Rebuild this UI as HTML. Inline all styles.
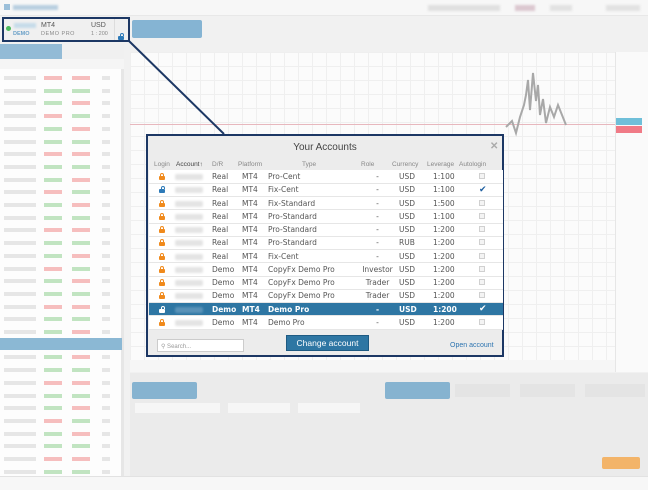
<!DOCTYPE html>
<html><head><meta charset="utf-8"><style>
*{margin:0;padding:0;box-sizing:border-box}
body{width:648px;height:490px;overflow:hidden;background:#f1f1f1;font-family:"Liberation Sans",sans-serif;position:relative}
.a{position:absolute}
.lr{position:absolute;left:0;width:122px;height:12.7px;font-size:6px;color:#c8c8c8}
.lr span{position:absolute;top:3px}
#modal{position:absolute;left:146px;top:134px;width:358px;height:223px;border:2px solid #1c3764;background:#ececec}
table{border-collapse:collapse;position:absolute;left:1px;top:34px;width:354px;font-size:7.5px;color:#555;font-family:"DejaVu Sans","Liberation Sans",sans-serif}
td{height:13.25px;border-bottom:1px solid #e6e6e6;background:#fff;white-space:nowrap;padding:0}
tr.sel td{background:#2e76a3;color:#fff;font-weight:bold}
.blur{display:inline-block;width:28px;height:6px;background:#e4e4e4;border-radius:2px;vertical-align:middle;filter:blur(1px)}
tr.sel .blur{background:#5a93b8}
.lock{display:inline-block;width:6px;height:4px;background:#f08a1c;border-radius:1px;position:relative;vertical-align:middle;margin-top:2px}
.lock:before{content:"";position:absolute;left:1px;top:-3px;width:2px;height:2px;border:1px solid #f08a1c;border-bottom:none;border-radius:2px 2px 0 0}
.lock.b{background:#2d7ab8}.lock.b:before{border-color:#2d7ab8;left:2px}
.lock.w{background:#fff}.lock.w:before{border-color:#fff;left:2px}
.cb{display:inline-block;width:6px;height:6px;border:1px solid #d0d0d0;background:#f4f4f4}
.hd{position:absolute;top:25px;font-size:6.5px;color:#888}
</style></head><body>
<div class="a" style="left:0;top:0;width:648px;height:16px;background:#f7f7f7;border-bottom:1px solid #e8e8e8"></div>
<div class="a" style="left:4px;top:4px;width:6px;height:6px;background:#9cc0da"></div>
<div class="a" style="left:13px;top:5px;width:45px;height:5px;background:#b8cfe0;filter:blur(1px)"></div>
<div class="a" style="left:428px;top:5px;width:72px;height:6px;background:#e0e0e0;filter:blur(1px)"></div>
<div class="a" style="left:515px;top:5px;width:20px;height:6px;background:#dcc8d0;filter:blur(1px)"></div>
<div class="a" style="left:550px;top:5px;width:22px;height:6px;background:#e2e2e2;filter:blur(1px)"></div>
<div class="a" style="left:606px;top:5px;width:34px;height:6px;background:#e2e2e2;filter:blur(1px)"></div>
<div class="a" style="left:2px;top:17px;width:128px;height:25px;background:#f0f0f0;border:2px solid #1c3764"></div>
<div class="a" style="left:6px;top:26px;width:5px;height:5px;border-radius:50%;background:#4cba5c"></div>
<div class="a" style="left:14px;top:23px;width:22px;height:5px;background:#c6dbe9;filter:blur(1px)"></div>
<div class="a" style="left:13px;top:31px;font-size:5.5px;color:#6aa0c8;font-weight:bold">DEMO</div>
<div class="a" style="left:41px;top:22px;font-size:7px;color:#555">MT4</div>
<div class="a" style="left:41px;top:31px;font-size:5.5px;color:#888;letter-spacing:.5px">DEMO PRO</div>
<div class="a" style="left:91px;top:22px;font-size:7px;color:#555">USD</div>
<div class="a" style="left:91px;top:31px;font-size:5.5px;color:#888">1 : 200</div>
<div class="a" style="left:114px;top:19px;width:1px;height:21px;background:#ddd"></div>
<div class="a" style="left:118px;top:28px"><span class="lock b"></span></div>
<div class="a" style="left:132px;top:20px;width:70px;height:18px;background:#85b4d3;border-radius:2px"></div>
<div class="a" style="left:0;top:44px;width:62px;height:15px;background:#93bbd6"></div>
<div class="a" style="left:62px;top:44px;width:62px;height:15px;background:#f0f0f0"></div>
<div class="a" style="left:0;top:59px;width:124px;height:10px;background:#f5f5f5"></div>
<div class="a" style="left:0;top:69px;width:124px;height:408px;background:#fdfdfd;border-right:3px solid #e6e6e6"></div>
<div id="left"></div>
<div class="a" style="left:0;top:338px;width:122px;height:12px;background:#8bb8d4"></div>
<div class="a" style="left:130px;top:38px;width:518px;height:14px;background:#f1f1f1"></div>
<div class="a" style="left:130px;top:52px;width:485px;height:308px;background:#fbfbfb;background-image:linear-gradient(#efefef 1px,transparent 1px),linear-gradient(90deg,#efefef 1px,transparent 1px);background-size:14px 14px"></div>
<div class="a" style="left:615px;top:52px;width:33px;height:320px;background:#fafafa;border-left:1px solid #e6e6e6"></div>
<div class="a" style="left:130px;top:124px;width:485px;height:1px;background:#e7b7bd"></div>
<div class="a" style="left:616px;top:118px;width:26px;height:7px;background:#6fbfd9"></div>
<div class="a" style="left:616px;top:126px;width:26px;height:7px;background:#f07a86"></div>
<svg class="a" style="left:500px;top:55px" width="80" height="100"><path d="M6 72 L12 66 L16 78 L20 62 L24 50 L26 40 L28 25 L30 55 L33 18 L36 46 L38 30 L40 60 L43 44 L46 68 L50 52 L54 62 L58 50 L62 60 L66 70" stroke="#a8a8a8" stroke-width="2" fill="none" filter="blur(0.6)"/></svg>
<div class="a" style="left:130px;top:360px;width:485px;height:12px;background:#f6f6f6"></div>
<div class="a" style="left:130px;top:373px;width:518px;height:103px;background:#ebebeb"></div>
<div class="a" style="left:132px;top:382px;width:65px;height:17px;background:#86b3d0;border-radius:2px"></div>
<div class="a" style="left:385px;top:382px;width:65px;height:17px;background:#86b3d0;border-radius:2px"></div>
<div class="a" style="left:455px;top:384px;width:55px;height:13px;background:#e4e4e4"></div>
<div class="a" style="left:520px;top:384px;width:55px;height:13px;background:#e4e4e4"></div>
<div class="a" style="left:585px;top:384px;width:60px;height:13px;background:#e4e4e4"></div>
<div class="a" style="left:135px;top:403px;width:85px;height:10px;background:#f6f6f6"></div>
<div class="a" style="left:228px;top:403px;width:62px;height:10px;background:#f6f6f6"></div>
<div class="a" style="left:298px;top:403px;width:62px;height:10px;background:#f6f6f6"></div>
<div class="a" style="left:602px;top:457px;width:38px;height:12px;background:#f3b469;border-radius:2px"></div>
<div class="a" style="left:0;top:476px;width:648px;height:14px;background:#f7f7f7;border-top:1px solid #e2e2e2"></div>
<svg class="a" style="left:0;top:0" width="648" height="490"><line x1="129" y1="41" x2="224" y2="134" stroke="#1c3764" stroke-width="2"/></svg>
<div id="modal">
<div class="a" style="left:0;top:6px;width:354px;text-align:center;font-size:10px;color:#444">Your Accounts</div>
<div class="a" style="left:342px;top:5px;font-size:10px;color:#aaa;font-weight:bold">✕</div>
<div class="hd" style="left:6px">Login</div>
<div class="hd" style="left:28px;color:#444">Account↑</div>
<div class="hd" style="left:64px">D/R</div>
<div class="hd" style="left:90px">Platform</div>
<div class="hd" style="left:154px">Type</div>
<div class="hd" style="left:213px">Role</div>
<div class="hd" style="left:244px">Currency</div>
<div class="hd" style="left:279px">Leverage</div>
<div class="hd" style="left:311px">Autologin</div>
<table>
<colgroup><col style="width:26px"><col style="width:37px"><col style="width:30px"><col style="width:26px"><col style="width:88px"><col style="width:43px"><col style="width:34px"><col style="width:37px"><col style="width:33px"></colgroup>
<tr><td style="padding-left:10px"><span class="lock"></span></td><td><span class="blur"></span></td><td>Real</td><td>MT4</td><td>Pro-Cent</td><td style="text-align:center">-</td><td>USD</td><td>1:100</td><td style="padding-left:9px"><span class="cb"></span></td></tr>
<tr><td style="padding-left:10px"><span class="lock b"></span></td><td><span class="blur"></span></td><td>Real</td><td>MT4</td><td>Fix-Cent</td><td style="text-align:center">-</td><td>USD</td><td>1:100</td><td style="padding-left:9px;color:#1e5fa0;font-size:9px;font-weight:bold">✔</td></tr>
<tr><td style="padding-left:10px"><span class="lock"></span></td><td><span class="blur"></span></td><td>Real</td><td>MT4</td><td>Fix-Standard</td><td style="text-align:center">-</td><td>USD</td><td>1:500</td><td style="padding-left:9px"><span class="cb"></span></td></tr>
<tr><td style="padding-left:10px"><span class="lock"></span></td><td><span class="blur"></span></td><td>Real</td><td>MT4</td><td>Pro-Standard</td><td style="text-align:center">-</td><td>USD</td><td>1:100</td><td style="padding-left:9px"><span class="cb"></span></td></tr>
<tr><td style="padding-left:10px"><span class="lock"></span></td><td><span class="blur"></span></td><td>Real</td><td>MT4</td><td>Pro-Standard</td><td style="text-align:center">-</td><td>USD</td><td>1:200</td><td style="padding-left:9px"><span class="cb"></span></td></tr>
<tr><td style="padding-left:10px"><span class="lock"></span></td><td><span class="blur"></span></td><td>Real</td><td>MT4</td><td>Pro-Standard</td><td style="text-align:center">-</td><td>RUB</td><td>1:200</td><td style="padding-left:9px"><span class="cb"></span></td></tr>
<tr><td style="padding-left:10px"><span class="lock"></span></td><td><span class="blur"></span></td><td>Real</td><td>MT4</td><td>Fix-Cent</td><td style="text-align:center">-</td><td>USD</td><td>1:200</td><td style="padding-left:9px"><span class="cb"></span></td></tr>
<tr><td style="padding-left:10px"><span class="lock"></span></td><td><span class="blur"></span></td><td>Demo</td><td>MT4</td><td>CopyFx Demo Pro</td><td style="text-align:center">Investor</td><td>USD</td><td>1:200</td><td style="padding-left:9px"><span class="cb"></span></td></tr>
<tr><td style="padding-left:10px"><span class="lock"></span></td><td><span class="blur"></span></td><td>Demo</td><td>MT4</td><td>CopyFx Demo Pro</td><td style="text-align:center">Trader</td><td>USD</td><td>1:200</td><td style="padding-left:9px"><span class="cb"></span></td></tr>
<tr><td style="padding-left:10px"><span class="lock"></span></td><td><span class="blur"></span></td><td>Demo</td><td>MT4</td><td>CopyFx Demo Pro</td><td style="text-align:center">Trader</td><td>USD</td><td>1:200</td><td style="padding-left:9px"><span class="cb"></span></td></tr>
<tr class="sel"><td style="padding-left:10px"><span class="lock w"></span></td><td><span class="blur"></span></td><td>Demo</td><td>MT4</td><td>Demo Pro</td><td style="text-align:center">-</td><td>USD</td><td>1:200</td><td style="padding-left:9px;font-size:9px">✔</td></tr>
<tr><td style="padding-left:10px"><span class="lock"></span></td><td><span class="blur"></span></td><td>Demo</td><td>MT4</td><td>Demo Pro</td><td style="text-align:center">-</td><td>USD</td><td>1:200</td><td style="padding-left:9px"><span class="cb"></span></td></tr>
</table>
<div class="a" style="left:9px;top:203px;width:87px;height:13px;background:#fff;border:1px solid #ccc;font-size:6px;color:#999;padding:3px 0 0 3px">⚲ Search...</div>
<div class="a" style="left:138px;top:199px;width:83px;height:16px;background:#2e76a3;border:1px solid #1e5a82;color:#fff;font-size:8.5px;text-align:center;line-height:14px">Change account</div>
<div class="a" style="left:302px;top:206px;font-size:7px;color:#2d74b0">Open account</div>
</div>
<script>
var h='',c=['#8fd08f','#f08a8a'];
for(var i=0;i<32;i++){var y=72+i*12.7;var g=(i*7)%3?0:1;
h+='<div class="lr" style="top:'+y+'px"><span style="left:4px;width:32px;height:4px;background:#e6e6e6;top:4px"></span><span style="left:44px;width:18px;height:4px;background:'+c[g]+';top:4px;opacity:.55"></span><span style="left:72px;width:18px;height:4px;background:'+c[(i+1)%2]+';top:4px;opacity:.55"></span><span style="left:102px;width:8px;height:4px;background:#e6e6e6;top:4px"></span></div>';}
document.getElementById('left').innerHTML=h;
</script>
</body></html>
